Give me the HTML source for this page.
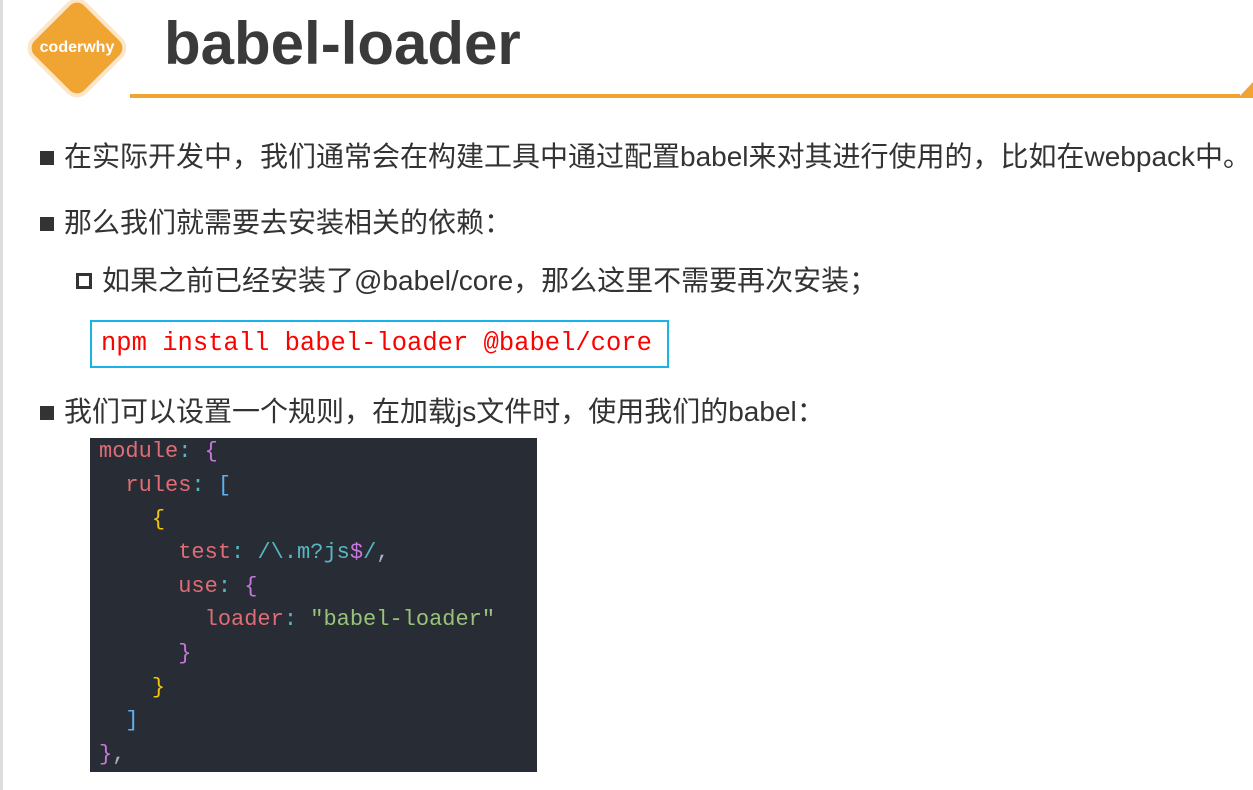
<!DOCTYPE html>
<html><head><meta charset="utf-8"><style>
body{margin:0;width:1253px;height:790px;background:#fff;position:relative;overflow:hidden;font-family:"Liberation Sans","Noto Sans CJK SC",sans-serif;color:#333}
.l{position:absolute;white-space:nowrap;font-size:28px;line-height:34px}
.sq{position:absolute;width:14px;height:14px;background:#333}
.code{position:absolute;left:90px;top:438px;width:447px;height:334px;background:#282c34;font-family:"Liberation Mono","DejaVu Sans Mono",monospace;font-size:22px}
.code div{position:absolute;left:9px;white-space:pre;line-height:34px}
.r{color:#e06c75}.c{color:#56b6c2}.p{color:#c678dd}.y{color:#f1c40f}.g{color:#98c379}.w{color:#abb2bf}.b{color:#61afef}
</style></head><body>
<div style="position:absolute;left:0;top:0;width:3px;height:790px;background:#ddd"></div>
<div style="position:absolute;left:38px;top:9px;width:70px;height:70px;transform:rotate(45deg);background:#f0a431;border:4px solid #fbe6c9;border-radius:14px"></div>
<div style="position:absolute;left:27px;top:39px;width:100px;text-align:center;color:#fff;font-weight:bold;font-size:16px">coderwhy</div>
<div style="position:absolute;left:164px;top:9px;font-size:60px;font-weight:bold;color:#3a3a3a;line-height:70px">babel-loader</div>
<div style="position:absolute;left:130px;top:94px;width:1110px;height:4px;background:#f0a431"></div>
<div style="position:absolute;left:1238px;top:82px;width:0;height:0;border-left:15px solid transparent;border-bottom:16px solid #f0a431"></div>
<div class="sq" style="left:40px;top:151px"></div>
<div class="l" style="left:64px;top:140px">在实际开发中，我们通常会在构建工具中通过配置babel来对其进行使用的，比如在webpack中。</div>
<div class="sq" style="left:40px;top:217px"></div>
<div class="l" style="left:64px;top:206px">那么我们就需要去安装相关的依赖：</div>
<div style="position:absolute;left:76px;top:273px;width:10px;height:10px;border:3px solid #333"></div>
<div class="l" style="left:102px;top:264px">如果之前已经安装了@babel/core，那么这里不需要再次安装；</div>
<div style="position:absolute;left:90px;top:320px;width:575px;height:44px;border:2px solid #1ab3e8"></div>
<div style="position:absolute;left:101px;top:327px;font-family:'Liberation Mono',monospace;font-size:25.5px;color:#f00;line-height:34px;white-space:pre">npm install babel-loader @babel/core</div>
<div class="sq" style="left:40px;top:406px"></div>
<div class="l" style="left:64px;top:395px">我们可以设置一个规则，在加载js文件时，使用我们的babel：</div>
<div class="code">
<div style="top:-3px"><span class="r">module</span><span class="c">:</span> <span class="p">{</span></div>
<div style="top:31px">  <span class="r">rules</span><span class="c">:</span> <span class="b">[</span></div>
<div style="top:65px">    <span class="y">{</span></div>
<div style="top:98px">      <span class="r">test</span><span class="c">:</span> <span class="c">/\.m?js</span><span class="p">$</span><span class="c">/</span><span class="w">,</span></div>
<div style="top:132px">      <span class="r">use</span><span class="c">:</span> <span class="p">{</span></div>
<div style="top:165px">        <span class="r">loader</span><span class="c">:</span> <span class="g">"babel-loader"</span></div>
<div style="top:199px">      <span class="p">}</span></div>
<div style="top:233px">    <span class="y">}</span></div>
<div style="top:266px">  <span class="b">]</span></div>
<div style="top:300px"><span class="p">}</span><span class="w">,</span></div>
</div>
</body></html>
